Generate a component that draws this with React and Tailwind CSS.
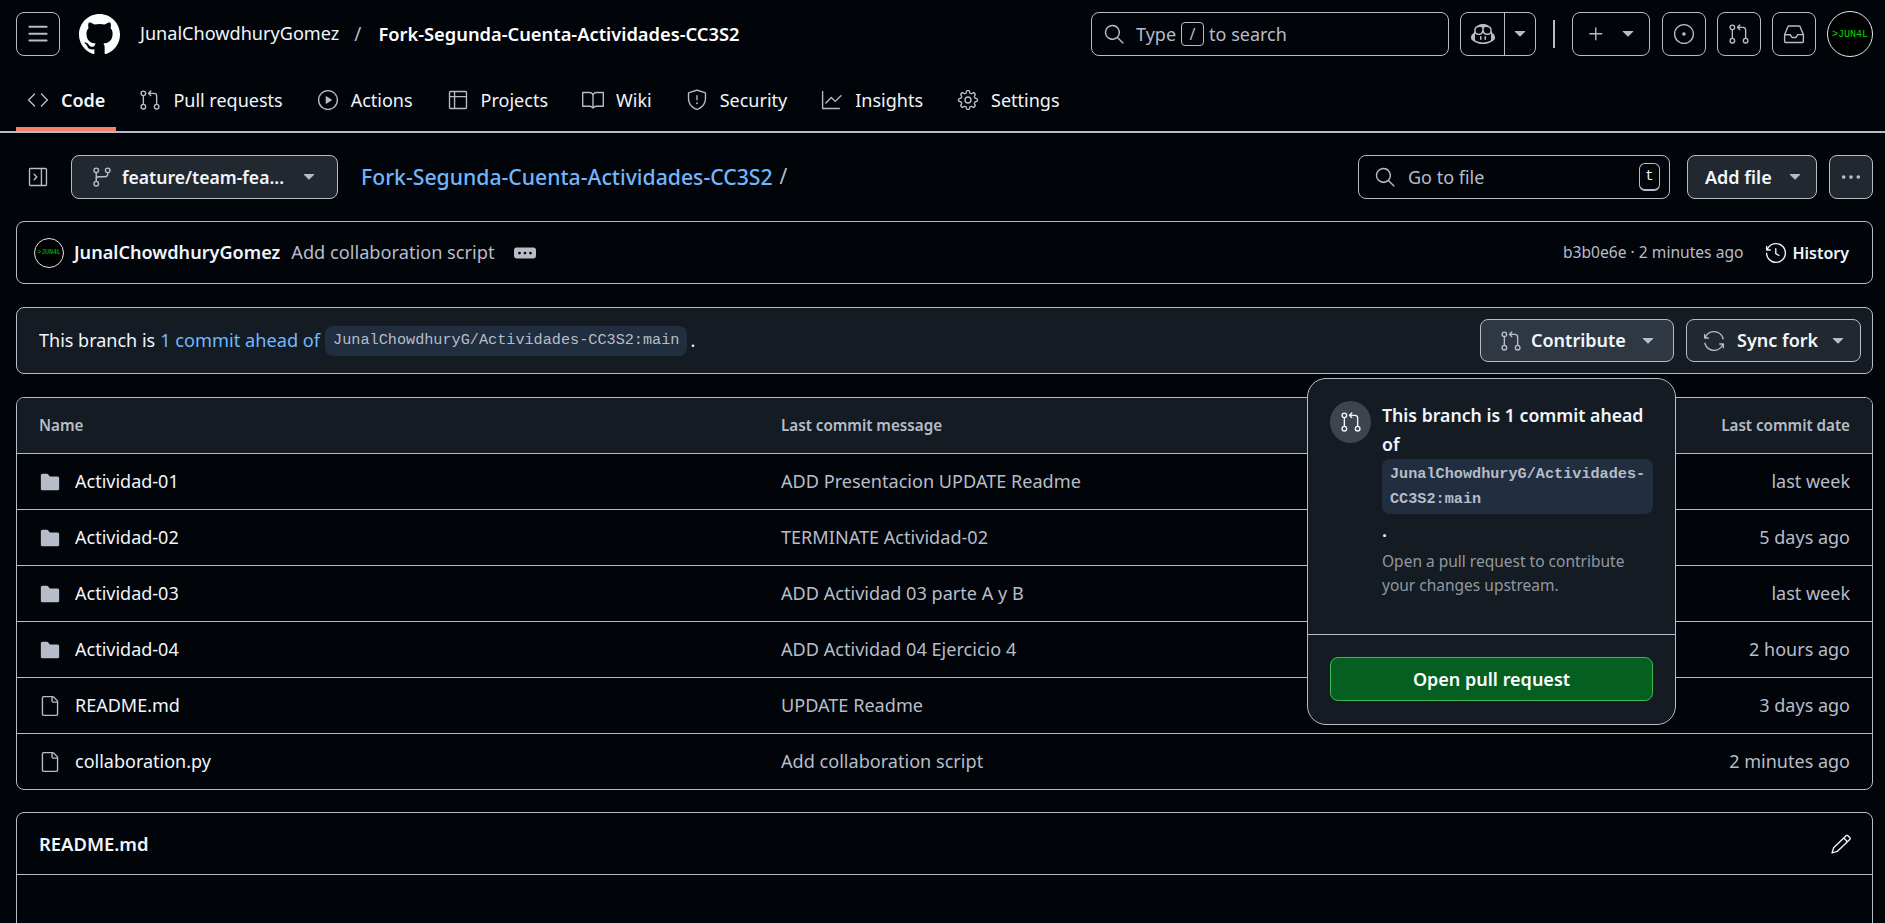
import React from "react";
import {
  GoSearch,
  GoCopilot,
  GoTriangleDown,
  GoPlus,
  GoIssueOpened,
  GoGitPullRequest,
  GoInbox,
  GoCode,
  GoPlay,
  GoTable,
  GoBook,
  GoShield,
  GoGraph,
  GoGear,
  GoSidebarCollapse,
  GoGitBranch,
  GoKebabHorizontal,
  GoHistory,
  GoSync,
  GoFileDirectoryFill,
  GoFile,
  GoPencil,
} from "react-icons/go";

const tabs = [
  { label: "Code", icon: GoCode, active: true },
  { label: "Pull requests", icon: GoGitPullRequest },
  { label: "Actions", icon: GoPlay },
  { label: "Projects", icon: GoTable },
  { label: "Wiki", icon: GoBook },
  { label: "Security", icon: GoShield },
  { label: "Insights", icon: GoGraph },
  { label: "Settings", icon: GoGear },
];

const files = [
  { name: "Actividad-01", dir: true, msg: "ADD Presentacion UPDATE Readme", date: "last week" },
  { name: "Actividad-02", dir: true, msg: "TERMINATE Actividad-02", date: "5 days ago" },
  { name: "Actividad-03", dir: true, msg: "ADD Actividad 03 parte A y B", date: "last week" },
  { name: "Actividad-04", dir: true, msg: "ADD Actividad 04 Ejercicio 4", date: "2 hours ago" },
  { name: "README.md", dir: false, msg: "UPDATE Readme", date: "3 days ago" },
  { name: "collaboration.py", dir: false, msg: "Add collaboration script", date: "2 minutes ago" },
];

const ThreeBars = ({ size }) => (
  <svg width={size} height={size} viewBox="0 0 16 16" fill="currentColor">
    <path d="M1 2.75A.75.75 0 0 1 1.75 2h12.5a.75.75 0 0 1 0 1.5H1.75A.75.75 0 0 1 1 2.75Zm0 5A.75.75 0 0 1 1.75 7h12.5a.75.75 0 0 1 0 1.5H1.75A.75.75 0 0 1 1 7.75ZM1.75 12h12.5a.75.75 0 0 1 0 1.5H1.75a.75.75 0 0 1 0-1.5Z" />
  </svg>
);

const GithubMark = ({ size, className }) => (
  <svg width={size} height={size} viewBox="0 0 16 16" fill="currentColor" className={className}>
    <path d="M8 0c4.42 0 8 3.58 8 8a8.013 8.013 0 0 1-5.45 7.59c-.4.08-.55-.17-.55-.38 0-.27.01-1.13.01-2.2 0-.75-.25-1.23-.54-1.48 1.78-.2 3.65-.88 3.65-3.95 0-.88-.31-1.59-.82-2.15.08-.2.36-1.02-.08-2.12 0 0-.67-.22-2.2.82-.64-.18-1.32-.27-2-.27-.68 0-1.36.09-2 .27-1.53-1.03-2.2-.82-2.2-.82-.44 1.1-.16 1.92-.08 2.12-.51.56-.82 1.28-.82 2.15 0 3.06 1.86 3.75 3.64 3.95-.23.2-.44.55-.51 1.07-.46.21-1.61.55-2.33-.66-.15-.24-.6-.83-1.23-.82-.67.01-.27.38.01.53.34.19.73.9.82 1.13.16.45.68 1.31 2.69.94 0 .67.01 1.3.01 1.49 0 .21-.15.45-.55.38A7.995 7.995 0 0 1 0 8c0-4.42 3.58-8 8-8Z" />
  </svg>
);

const Ellipsis = ({ size, className }) => (
  <svg width={size} height={size} viewBox="0 0 16 16" fill="currentColor" className={className}>
    <path d="M0 5.75C0 4.784.784 4 1.75 4h12.5c.966 0 1.75.784 1.75 1.75v4.5A1.75 1.75 0 0 1 14.25 12H1.75A1.75 1.75 0 0 1 0 10.25ZM12 7a1 1 0 1 0 0 2 1 1 0 0 0 0-2ZM7 8a1 1 0 1 0 2 0 1 1 0 0 0-2 0ZM4 7a1 1 0 1 0 0 2 1 1 0 0 0 0-2Z" />
  </svg>
);

const Avatar = ({ className, textClass }) => (
  <div
    className={`flex items-center justify-center rounded-full border border-[#e5e7eb] bg-black font-['Liberation_Mono',monospace] text-[#00d800] ${className} ${textClass}`}
  >
    &gt;JUN4L
  </div>
);

const HeaderButton = ({ icon: Icon }) => (
  <button className="flex h-[44px] w-[44px] items-center justify-center rounded-lg border border-[#b7bdc8] text-[#b7bdc8]">
    <Icon size={22} />
  </button>
);

const Caret = ({ className = "text-[#b7bdc8]" }) => (
  <GoTriangleDown size={20} className={className} />
);

const Header = () => (
  <header className="flex h-[68px] items-center pl-4 pr-3">
    <button className="flex h-[44px] w-[44px] items-center justify-center rounded-lg border border-[#b7bdc8] text-[#b7bdc8]">
      <ThreeBars size={22} />
    </button>
    <GithubMark size={41} className="ml-[19px] text-white" />
    <span className="ml-[20px] text-[18.1px] text-[#f0f6fc]">JunalChowdhuryGomez</span>
    <span className="ml-[15px] text-[19px] text-[#b7bdc8]">/</span>
    <span className="ml-[17px] text-[18.3px] font-semibold text-white">
      Fork-Segunda-Cuenta-Actividades-CC3S2
    </span>

    <div className="ml-auto flex h-[44px] w-[358px] items-center rounded-lg border border-[#b7bdc8] pl-[11px] text-[18px] text-[#b7bdc8]">
      <GoSearch size={22} />
      <span className="ml-[11px]">Type</span>
      <span className="mx-[5px] flex h-[24px] w-[23px] items-center justify-center rounded border border-[#b7bdc8] text-[16px]">
        /
      </span>
      <span>to search</span>
    </div>
    <div className="ml-[11px] flex h-[44px] w-[76px] items-center rounded-lg border border-[#b7bdc8] text-[#b7bdc8]">
      <span className="flex h-full w-[44px] items-center justify-center border-r border-[#b7bdc8]">
        <GoCopilot size={24} />
      </span>
      <span className="flex flex-1 items-center justify-center">
        <Caret />
      </span>
    </div>
    <div className="ml-[17px] h-[28px] w-[2px] bg-[#b7bdc8]" />
    <button className="ml-[17px] flex h-[44px] w-[78px] items-center justify-center gap-[11px] rounded-lg border border-[#b7bdc8] text-[#b7bdc8]">
      <GoPlus size={22} />
      <Caret />
    </button>
    <div className="ml-3 flex items-center gap-[11px]">
      <HeaderButton icon={GoIssueOpened} />
      <HeaderButton icon={GoGitPullRequest} />
      <HeaderButton icon={GoInbox} />
      <Avatar className="h-[46px] w-[46px]" textClass="text-[10px]" />
    </div>
  </header>
);

const Tabs = () => (
  <nav className="flex h-[65px] gap-3 border-b-2 border-[#b7bdc8] px-4">
    {tabs.map(({ label, icon: Icon, active }) => (
      <a
        key={label}
        className={`flex h-full items-center gap-[12px] border-b-[4px] px-[11px] pt-[5px] text-[18px] text-[#f0f6fc] ${
          active ? "border-[#f78166] font-semibold" : "border-transparent"
        }`}
      >
        <Icon size={22} className="text-[#b7bdc8]" />
        {label}
      </a>
    ))}
  </nav>
);

const Toolbar = () => (
  <div className="flex h-[44px] items-center">
    <GoSidebarCollapse size={22} className="ml-[11px] text-[#b7bdc8]" />
    <button className="ml-[22px] flex h-full w-[267px] items-center rounded-lg border border-[#b7bdc8] bg-[#212830] pl-[19px] pr-[18px]">
      <GoGitBranch size={22} className="text-[#b7bdc8]" />
      <span className="ml-[9px] text-[17.6px] font-semibold text-[#f0f6fc]">feature/team-fea...</span>
      <Caret className="ml-auto text-[#b7bdc8]" />
    </button>
    <a className="ml-[23px] text-[21.2px] font-medium text-[#71b7ff]">Fork-Segunda-Cuenta-Actividades-CC3S2</a>
    <span className="ml-[7px] text-[21px] text-[#b7bdc8]">/</span>

    <div className="ml-auto flex h-full w-[312px] items-center rounded-lg border border-[#b7bdc8] pl-[15px] pr-[9px]">
      <GoSearch size={22} className="text-[#b7bdc8]" />
      <span className="ml-3 text-[18px] text-[#b7bdc8]">Go to file</span>
      <span className="ml-auto flex h-[28px] w-[21px] items-center justify-center rounded-md border border-[#b7bdc8] border-b-2 font-['Liberation_Mono',monospace] text-[14px] text-[#f0f6fc]">
        t
      </span>
    </div>
    <button className="ml-[17px] flex h-full w-[130px] items-center rounded-lg border border-[#b7bdc8] bg-[#212830] pl-[17px] text-[18px] font-semibold text-[#f0f6fc]">
      Add file
      <Caret className="ml-[13px] text-[#b7bdc8]" />
    </button>
    <button className="ml-3 flex h-full w-[44px] items-center justify-center rounded-lg border border-[#b7bdc8] bg-[#212830] text-[#b7bdc8]">
      <GoKebabHorizontal size={22} />
    </button>
  </div>
);

const CommitBox = () => (
  <div className="mt-[22px] flex h-[63px] items-center rounded-lg border border-[#b7bdc8] pl-[17px] pr-[23px]">
    <Avatar className="h-[30px] w-[30px]" textClass="text-[6.5px]" />
    <span className="ml-[10px] text-[18.1px] font-semibold text-[#f0f6fc]">JunalChowdhuryGomez</span>
    <span className="ml-[11px] text-[18.2px] text-[#b7bdc8]">Add collaboration script</span>
    <Ellipsis size={22} className="ml-[19px] text-[#b7bdc8]" />
    <span className="ml-auto text-[15.6px] text-[#b7bdc8]">b3b0e6e · 2 minutes ago</span>
    <GoHistory size={22} className="ml-[22px] text-[#f0f6fc]" />
    <span className="ml-[5px] text-[16px] font-semibold text-[#f0f6fc]">History</span>
  </div>
);

const Popover = () => (
  <div className="absolute right-[-2px] top-[59px] z-10 flex h-[347px] w-[369px] flex-col rounded-[19px] border border-[#b7bdc8] bg-[#151b23] text-left">
    <div className="flex h-[255px] gap-[11px] pl-[22px] pr-[22px] pt-[22px]">
      <span className="flex h-[42px] w-[41px] shrink-0 items-center justify-center rounded-full bg-[#3d444d] text-[#f0f6fc]">
        <GoGitPullRequest size={22} />
      </span>
      <div className="min-w-0 flex-1">
        <p className="text-[17.7px] font-semibold leading-[29px] text-[#f0f6fc]">
          This branch is 1 commit ahead of
        </p>
        <div className="h-[55px] rounded-lg bg-[#212e3f] px-2 pt-[3px] font-['Liberation_Mono',monospace] text-[15.2px] font-bold leading-[25px] text-[#b7bdc8]">
          JunalChowdhuryG/Actividades-
          <br />
          CC3S2:main
        </div>
        <p className="mt-[3px] text-[18px] font-semibold leading-[26px] text-[#f0f6fc]">.</p>
        <p className="mt-[6px] text-[15.5px] leading-[24px] text-[#9198a1]">
          Open a pull request to contribute your changes upstream.
        </p>
      </div>
    </div>
    <div className="border-t border-[#b7bdc8] px-[22px] pt-[22px]">
      <button className="flex h-[44px] w-full items-center justify-center rounded-lg border border-[#3fb950] bg-[#055f20] text-[18px] font-semibold text-white">
        Open pull request
      </button>
    </div>
  </div>
);

const ForkBanner = () => (
  <div className="relative mt-[23px] flex h-[67px] items-center rounded-lg border border-[#b7bdc8] bg-[#151b23] pl-[22px] pr-[11px]">
    <span className="text-[18px] text-[#f0f6fc]">This branch is</span>
    <a className="ml-[5px] text-[18.2px] text-[#71b7ff]">1 commit ahead of</a>
    <code className="ml-[5px] flex h-[30px] items-center rounded-lg bg-[#212e3f] px-2 font-['Liberation_Mono',monospace] text-[15.2px] text-[#b7bdc8]">
      JunalChowdhuryG/Actividades-CC3S2:main
    </code>
    <span className="ml-[3px] text-[18px] text-[#f0f6fc]">.</span>

    <div className="relative ml-auto">
      <button className="flex h-[43px] w-[194px] items-center rounded-lg border border-[#b7bdc8] bg-[#2f3742] pl-[19px] text-[18px] font-semibold text-[#f0f6fc]">
        <GoGitPullRequest size={22} className="text-[#b7bdc8]" />
        <span className="ml-[9px]">Contribute</span>
        <Caret className="ml-[12px] text-[#b7bdc8]" />
      </button>
      <Popover />
    </div>
    <button className="ml-3 flex h-[43px] w-[175px] items-center rounded-lg border border-[#b7bdc8] bg-[#212830] pl-[16px] text-[18px] font-semibold text-[#f0f6fc]">
      <GoSync size={22} className="text-[#b7bdc8]" />
      <span className="ml-[12px]">Sync fork</span>
      <Caret className="ml-[10px] text-[#b7bdc8]" />
    </button>
  </div>
);

const gridCols = "grid grid-cols-[742px_1fr_auto] items-center";

const FileTable = () => (
  <div className="mt-[23px] overflow-hidden rounded-lg border border-[#b7bdc8]">
    <div className={`${gridCols} h-[56px] border-b border-[#b7bdc8] bg-[#151b23] pl-[22px] pr-[22px] text-[15.2px] font-semibold text-[#b7bdc8]`}>
      <span>Name</span>
      <span>Last commit message</span>
      <span>Last commit date</span>
    </div>
    {files.map((f, i) => (
      <div
        key={f.name}
        className={`${gridCols} pl-[22px] pr-[22px] ${i < files.length - 1 ? "h-[56px] border-b border-[#b7bdc8]" : "h-[55px]"}`}
      >
        <span className="flex items-center gap-[14px] text-[18px] text-[#f0f6fc]">
          {f.dir ? (
            <GoFileDirectoryFill size={22} className="text-[#b7bdc8]" />
          ) : (
            <GoFile size={22} className="text-[#b7bdc8]" />
          )}
          {f.name}
        </span>
        <span className="text-[18.1px] text-[#b7bdc8]">{f.msg}</span>
        <span className="text-right text-[18px] text-[#b7bdc8]">{f.date}</span>
      </div>
    ))}
  </div>
);

const Readme = () => (
  <div className="mt-[22px] h-[200px] rounded-t-lg border border-[#b7bdc8]">
    <div className="flex h-[62px] items-center justify-between border-b border-[#b7bdc8] pl-[22px] pr-[20px]">
      <span className="text-[18.4px] font-semibold text-[#f0f6fc]">README.md</span>
      <GoPencil size={22} className="text-[#f0f6fc]" />
    </div>
  </div>
);

export default function App() {
  return (
    <div className="h-[923px] overflow-hidden bg-[#010409] font-['Noto_Sans',sans-serif]">
      <Header />
      <Tabs />
      <main className="px-4 pt-[22px] pr-3">
        <Toolbar />
        <CommitBox />
        <ForkBanner />
        <FileTable />
        <Readme />
      </main>
    </div>
  );
}
